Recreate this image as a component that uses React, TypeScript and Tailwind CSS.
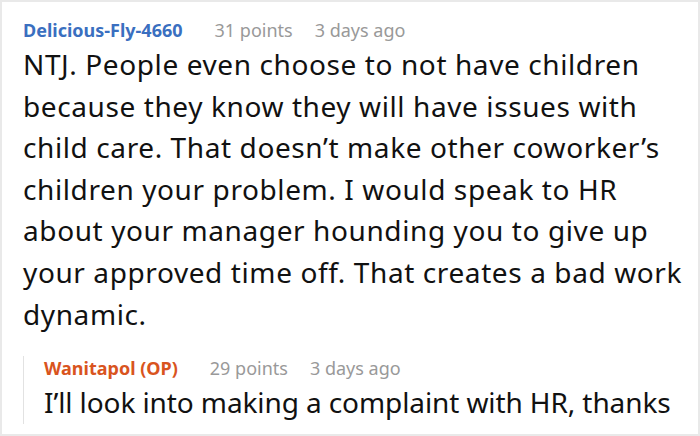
// App.tsx

const font = { fontFamily: '"Noto Sans", "Open Sans", sans-serif' };

type MetaProps = {
  author: string;
  points: number;
  age: string;
  op?: boolean;
};

const CommentMeta = ({ author, points, age, op }: MetaProps) => (
  <div className="flex items-baseline text-[18px] leading-[24px]">
    <span
      className={
        op
          ? "font-bold text-[#d9541e]"
          : "font-bold text-[#3a6fc0]"
      }
    >
      {author}
    </span>
    <span className="ml-[32px] text-[#999999]">{points} points</span>
    <span className="ml-[22px] text-[#999999]">{age}</span>
  </div>
);

export default function App() {
  return (
    <div
      style={font}
      className="w-[700px] h-[436px] overflow-hidden bg-white border-2 border-[#e9e9e9] pl-[21px] pr-[4px] pt-[16px]"
    >
      {/* -- TOP COMMENT -- */}
      <CommentMeta author="Delicious-Fly-4660" points={31} age="3 days ago" />
      <p className="mt-[2px] text-[28px] leading-[41.6px] tracking-[0.6px] text-[#111111]">
        NTJ. People even choose to not have children
        <br />
        because they know they will have issues with
        <br />
        child care. That doesn’t make other coworker’s
        <br />
        children your problem. I would speak to HR
        <br />
        about your manager hounding you to give up
        <br />
        your approved time off. That creates a bad work
        <br />
        dynamic.
      </p>

      {/* -- REPLY -- */}
      <div className="mt-[21px] border-l border-[#e2e2e2] pl-5">
        <CommentMeta author="Wanitapol (OP)" points={29} age="3 days ago" op />
        <p className="mt-[2px] text-[28px] leading-[41.6px] tracking-[-0.1px] text-[#111111] whitespace-nowrap">
          I’ll look into making a complaint with HR, thanks
        </p>
      </div>
    </div>
  );
}
